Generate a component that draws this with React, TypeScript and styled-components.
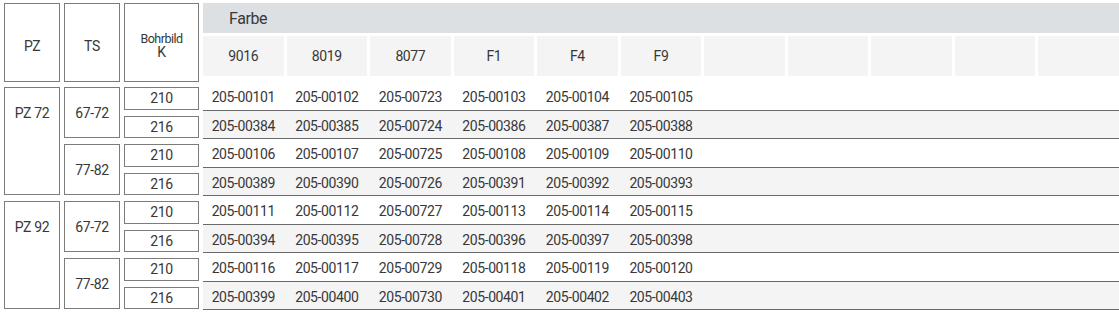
import React from "react";
import styled, {createGlobalStyle} from "styled-components";

const GlobalStyle = createGlobalStyle`
  html, body {
    margin: 0;
    padding: 0;
    background: #ffffff;
  }
  body {
    font-family: Roboto, "Liberation Sans", sans-serif;
    font-weight: 400;
    color: #383838;
  }
`

const colors = ["9016", "8019", "8077", "F1", "F4", "F9", "", "", "", "", ""];

const groups = [
  {
    pz: "PZ 72",
    ts: [
      {range: "67-72", rows: [["210", "205-00101", "205-00102", "205-00723", "205-00103", "205-00104", "205-00105"], ["216", "205-00384", "205-00385", "205-00724", "205-00386", "205-00387", "205-00388"]]},
      {range: "77-82", rows: [["210", "205-00106", "205-00107", "205-00725", "205-00108", "205-00109", "205-00110"], ["216", "205-00389", "205-00390", "205-00726", "205-00391", "205-00392", "205-00393"]]},
    ]
  },
  {
    pz: "PZ 92",
    ts: [
      {range: "67-72", rows: [["210", "205-00111", "205-00112", "205-00727", "205-00113", "205-00114", "205-00115"], ["216", "205-00394", "205-00395", "205-00728", "205-00396", "205-00397", "205-00398"]]},
      {range: "77-82", rows: [["210", "205-00116", "205-00117", "205-00729", "205-00118", "205-00119", "205-00120"], ["216", "205-00399", "205-00400", "205-00730", "205-00401", "205-00402", "205-00403"]]},
    ]
  },
];

const Table = styled.div`
  display: grid;
  grid-template-columns: 56px 56px 75px 1fr;
  grid-template-rows: 79px repeat(8, 28.5px);
  column-gap: 4px;
  padding: 3px 0 0 4px;
  width: 1115px;
`

const HeadBox = styled.div<{ $col: number }>`
  grid-column: ${p => p.$col};
  grid-row: 1;
  border: 1px solid #7c7c7c;
  display: flex;
  flex-direction: column;
  align-items: center;
  justify-content: center;
  padding-top: 6px;
  font-size: 14px;
  line-height: 14px;
  letter-spacing: -0.4px;
`

const SmallLabel = styled.span`
  font-size: 12.5px;
  line-height: 13px;
  letter-spacing: -0.5px;
`

const ColorHead = styled.div`
  grid-column: 4;
  grid-row: 1;
  display: flex;
  flex-direction: column;
  gap: 3px;
`

const FarbeBand = styled.div`
  height: 30px;
  background: #dce0e3;
  display: flex;
  align-items: center;
  padding-left: 26px;
  font-size: 16px;
  letter-spacing: -0.4px;
`

const CellRow = styled.div`
  display: grid;
  grid-template-columns: repeat(11, 1fr);
  column-gap: 3px;
  height: 40px;
`

const ColorCell = styled.div`
  background: #f4f4f4;
  display: flex;
  align-items: center;
  justify-content: center;
  font-size: 14px;
  letter-spacing: -0.4px;
`

const BodyBox = styled.div<{ $col: number, $row: number, $span: number }>`
  grid-column: ${p => p.$col};
  grid-row: ${p => p.$row} / span ${p => p.$span};
  margin: 5px 0 1px 0;
  border: 1px solid #7c7c7c;
  display: flex;
  justify-content: center;
  align-items: ${p => p.$span > 2 ? "flex-start" : "center"};
  font-size: 14px;
  letter-spacing: -0.4px;
`

const GroupLabel = styled.div`
  height: 50px;
  display: flex;
  align-items: center;
`

const DataRow = styled.div<{ $row: number, $alt: boolean }>`
  grid-column: 4;
  grid-row: ${p => p.$row};
  display: grid;
  grid-template-columns: repeat(11, 1fr);
  column-gap: 3px;
  background: ${p => p.$alt ? "#f4f4f4" : "#ffffff"};
  border-bottom: 1px solid #6a6a6a;
  align-items: center;
  padding-top: 3px;
  font-size: 14px;
  letter-spacing: -0.4px;
`

const DataCell = styled.div`
  text-align: center;
`

export default function App() {
  let row = 2;
  const items: React.ReactNode[] = [];
  groups.forEach((g, gi) => {
    items.push(
      <BodyBox key={`pz${gi}`} $col={1} $row={row} $span={4}>
        <GroupLabel>{g.pz}</GroupLabel>
      </BodyBox>
    );
    g.ts.forEach((t, ti) => {
      items.push(
        <BodyBox key={`ts${gi}-${ti}`} $col={2} $row={row} $span={2}>{t.range}</BodyBox>
      );
      t.rows.forEach((r, ri) => {
        const [k, ...codes] = r;
        items.push(
          <BodyBox key={`k${row}`} $col={3} $row={row} $span={1}>{k}</BodyBox>
        );
        items.push(
          <DataRow key={`d${row}`} $row={row} $alt={ri === 1}>
            {colors.map((_, i) => <DataCell key={i}>{codes[i] ?? ""}</DataCell>)}
          </DataRow>
        );
        row++;
      });
    });
  });

  return (
    <>
      <GlobalStyle/>
      <Table>
        <HeadBox $col={1}>PZ</HeadBox>
        <HeadBox $col={2}>TS</HeadBox>
        <HeadBox $col={3}>
          <SmallLabel>Bohrbild</SmallLabel>
          <span>K</span>
        </HeadBox>
        <ColorHead>
          <FarbeBand>Farbe</FarbeBand>
          <CellRow>
            {colors.map((c, i) => <ColorCell key={i}>{c}</ColorCell>)}
          </CellRow>
        </ColorHead>
        {items}
      </Table>
    </>
  );
}
